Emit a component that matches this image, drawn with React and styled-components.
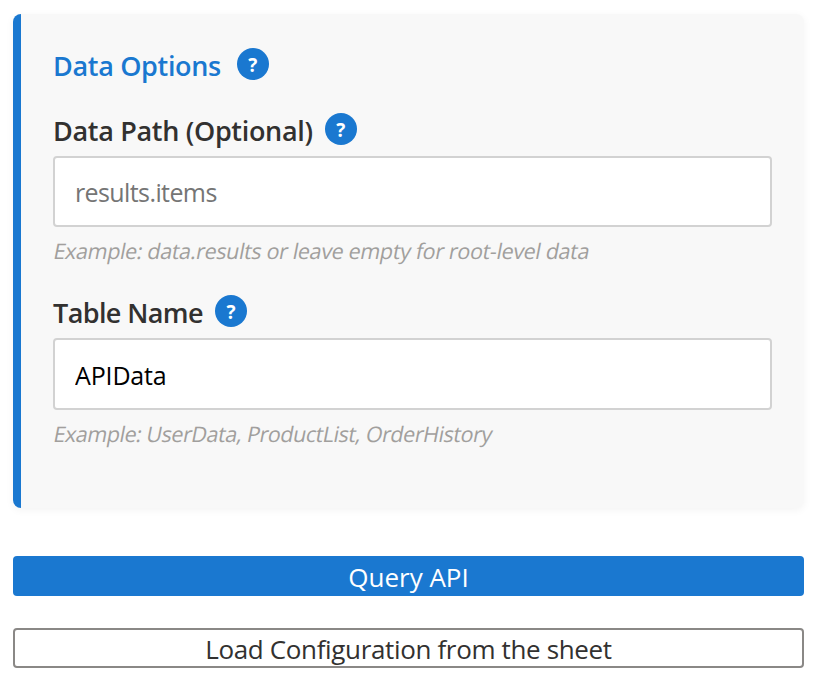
import React, { useState } from 'react';
import styled, { createGlobalStyle } from 'styled-components';

const fields = [
  {
    id: 'dataPath',
    label: 'Data Path (Optional)',
    labelSpacing: '-0.32px',
    placeholder: 'results.items',
    inputSpacing: '-0.6px',
    inputHeight: 71,
    inputPadding: '0 20px',
    hint: 'Example: data.results or leave empty for root-level data',
    hintSpacing: '-0.34px',
  },
  {
    id: 'tableName',
    label: 'Table Name',
    labelSpacing: '-0.6px',
    placeholder: 'APIData',
    inputSpacing: '-0.15px',
    inputHeight: 72,
    inputPadding: '2px 20px 0',
    hint: 'Example: UserData, ProductList, OrderHistory',
    hintSpacing: '-0.45px',
  },
];

export default function App() {
  const [values, setValues] = useState({ dataPath: '', tableName: 'APIData' });

  const handleChange = (e) => {
    setValues({ ...values, [e.target.id]: e.target.value });
  };

  return (
    <>
      <GlobalStyle />
      <Page>
        <Card>
          <TitleRow>
            <Title>Data Options</Title>
            <Help type='button'>?</Help>
          </TitleRow>
          {fields.map((field) => (
            <Field key={field.id}>
              <LabelRow>
                <Label htmlFor={field.id} $spacing={field.labelSpacing}>
                  {field.label}
                </Label>
                <Help type='button'>?</Help>
              </LabelRow>
              <Input
                id={field.id}
                value={values[field.id]}
                placeholder={field.placeholder}
                onChange={handleChange}
                $spacing={field.inputSpacing}
                $height={field.inputHeight}
                $padding={field.inputPadding}
              />
              <Hint $spacing={field.hintSpacing}>{field.hint}</Hint>
            </Field>
          ))}
        </Card>
        <Button type='button' $primary>
          Query API
        </Button>
        <Button type='button'>Load Configuration from the sheet</Button>
      </Page>
    </>
  );
}

const GlobalStyle = createGlobalStyle`
  * {
    box-sizing: border-box;
  }
  body {
    margin: 0;
    background: #ffffff;
    color: #323130;
    font-family: 'Segoe UI', 'Open Sans', 'Noto Sans', sans-serif;
  }
`;

const Page = styled.main`
  display: flex;
  flex-direction: column;
  padding: 14px 12px 22px 13px;
`;

const Card = styled.section`
  height: 494px;
  margin-bottom: 48px;
  padding: 34px 32px 0;
  border-left: 8px solid #1a78d0;
  border-radius: 8px;
  background: #f8f8f8;
  box-shadow: 0 2px 8px rgba(0, 0, 0, 0.05);
`;

const TitleRow = styled.div`
  display: flex;
  align-items: flex-start;
  gap: 16px;
  height: 65px;
`;

const Title = styled.h2`
  margin: 0;
  color: #1a78d0;
  font-size: 27px;
  font-weight: 600;
  line-height: 36px;
  letter-spacing: -0.33px;
  white-space: nowrap;
`;

const Field = styled.div`
  height: 182px;
`;

const LabelRow = styled.div`
  display: flex;
  align-items: flex-start;
  gap: 12px;
  height: 43px;
`;

const Label = styled.label`
  font-size: 27px;
  font-weight: 600;
  line-height: 36px;
  letter-spacing: ${(props) => props.$spacing};
  white-space: nowrap;
`;

const Help = styled.button`
  flex: none;
  width: 32px;
  height: 32px;
  padding: 3px 0 0;
  border: none;
  border-radius: 50%;
  background: #1a78d0;
  color: #ffffff;
  font-family: inherit;
  font-size: 19px;
  font-weight: 700;
  line-height: 29px;
  text-align: center;
`;

const Input = styled.input`
  display: block;
  width: 719px;
  height: ${(props) => props.$height}px;
  padding: ${(props) => props.$padding};
  border: 2px solid #d2d2d2;
  border-radius: 4px;
  background: #ffffff;
  color: #000000;
  font-family: inherit;
  font-size: 25px;
  letter-spacing: ${(props) => props.$spacing};
  &::placeholder {
    color: #757575;
  }
`;

/* slants the upright face, so the letters keep their roman shapes */
const Hint = styled.p`
  margin: 8px 0 0;
  padding-left: 1px;
  color: #a19f9d;
  font-size: 21.5px;
  line-height: 32px;
  letter-spacing: ${(props) => props.$spacing};
  white-space: nowrap;
  transform: skewX(-11deg);
`;

const Button = styled.button`
  height: 40px;
  padding: 2px 0 0;
  border: ${(props) => (props.$primary ? 'none' : '2px solid #8a8886')};
  border-radius: 4px;
  background: ${(props) => (props.$primary ? '#1a78d0' : '#ffffff')};
  color: ${(props) => (props.$primary ? '#ffffff' : '#323130')};
  font-family: inherit;
  font-size: 26px;
  line-height: ${(props) => (props.$primary ? '36px' : '34px')};
  letter-spacing: ${(props) => (props.$primary ? '0' : '-0.35px')};
  & + & {
    margin-top: 32px;
  }
`;
